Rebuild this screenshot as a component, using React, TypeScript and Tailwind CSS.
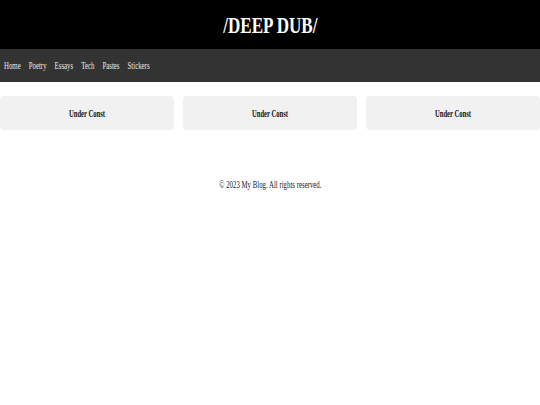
const links = ["Home", "Poetry", "Essays", "Tech", "Pastes", "Stickers"];

export default function App() {
  return (
    <div className="min-h-[405px] bg-white font-['Liberation_Serif','Times_New_Roman',serif]">
      {/* Header */}
      <header className="h-[49px] bg-black flex items-center justify-center">
        <h1 className="inline-block scale-x-[0.71] text-[24px] leading-none font-bold text-white whitespace-nowrap">
          /DEEP DUB/
        </h1>
      </header>

      {/* Nav */}
      <nav className="h-[33px] bg-[#333333] flex items-center pl-[4px]">
        <ul className="flex gap-[13px] origin-left scale-x-[0.62] text-[11px] text-[#e8e8e8] whitespace-nowrap">
          {links.map((l) => (
            <li key={l}>
              <a href="#">{l}</a>
            </li>
          ))}
        </ul>
      </nav>

      {/* Cards */}
      <main className="pt-[14px] grid grid-cols-3 gap-[9px]">
        {[0, 1, 2].map((i) => (
          <div
            key={i}
            className="h-[34px] rounded-[4px] bg-[#f1f1f1] flex items-center justify-center"
          >
            <span className="inline-block scale-x-[0.6] text-[11px] font-bold text-[#111] whitespace-nowrap">
              Under Const
            </span>
          </div>
        ))}
      </main>

      {/* Footer */}
      <footer className="pt-[46px] flex justify-center">
        <p className="inline-block scale-x-[0.62] text-[11px] text-[#222] whitespace-nowrap">
          © 2023 My Blog. All rights reserved.
        </p>
      </footer>
    </div>
  );
}
